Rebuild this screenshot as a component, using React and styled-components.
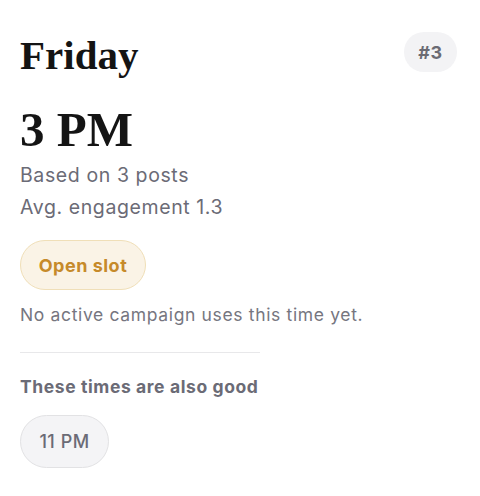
import styled, { createGlobalStyle } from "styled-components";

const GlobalStyle = createGlobalStyle`
  html, body {
    margin: 0;
    padding: 0;
    background: #ffffff;
  }
  body {
    font-family: Inter, "Noto Sans", sans-serif;
    color: #6b6b76;
  }
`;

const Card = styled.div`
  width: 480px;
  box-sizing: border-box;
  padding: 29px 23px 20px 20px;
  display: flex;
  flex-direction: column;
`;

const Header = styled.div`
  display: flex;
  justify-content: space-between;
  align-items: flex-start;
`;

const Day = styled.h1`
  margin: 0;
  font-family: "Liberation Serif", "DejaVu Serif", serif;
  font-weight: 700;
  font-size: 41px;
  line-height: 52px;
  color: #141414;
`;

const Rank = styled.span`
  margin-top: 3px;
  height: 40px;
  width: 53px;
  display: inline-flex;
  align-items: center;
  justify-content: center;
  border-radius: 20px;
  background: #f3f3f5;
  font-weight: 700;
  font-size: 18px;
  letter-spacing: 0.6px;
  color: #6b6b73;
`;

const Time = styled.div`
  margin-top: 21px;
  font-family: "Liberation Serif", "DejaVu Serif", serif;
  font-weight: 700;
  font-size: 49px;
  line-height: 56px;
  color: #141414;
`;

const Stats = styled.div`
  display: flex;
  flex-direction: column;
  gap: 4px;
  margin-top: 3px;
`;

const Stat = styled.p`
  margin: 0;
  font-size: 19.5px;
  line-height: 28px;
  letter-spacing: 0.6px;
  color: #6b6b76;
`;

const Pill = styled.span`
  display: inline-flex;
  align-items: center;
  justify-content: center;
  box-sizing: border-box;
  height: ${(p) => (p.$tone === "gold" ? "50px" : "53px")};
  width: ${(p) => (p.$tone === "gold" ? "126px" : "89px")};
  border-radius: 999px;
  font-size: 18px;
  letter-spacing: 0.5px;
  font-weight: ${(p) => (p.$tone === "gold" ? 700 : 500)};
  background: ${(p) => (p.$tone === "gold" ? "#faf3e6" : "#f4f4f6")};
  border: 1px solid ${(p) => (p.$tone === "gold" ? "#f0dfb8" : "#e2e2e4")};
  color: ${(p) => (p.$tone === "gold" ? "#c68a2a" : "#6b6b76")};
`;

const SlotWrap = styled.div`
  margin-top: 19px;
  display: flex;
`;

const Note = styled.p`
  margin: 13px 0 0;
  font-size: 17.5px;
  line-height: 24px;
  letter-spacing: 0.65px;
  color: #76767f;
`;

const Divider = styled.hr`
  width: 240px;
  margin: 25px 0 0;
  border: none;
  border-top: 1px solid #e8e8ea;
`;

const SubTitle = styled.h3`
  margin: 22px 0 0;
  font-size: 17.5px;
  line-height: 24px;
  letter-spacing: 0.6px;
  font-weight: 700;
  color: #6b6b76;
`;

const AltList = styled.div`
  margin-top: 16px;
  display: flex;
  gap: 8px;
`;

export default function App() {
  return (
    <>
      <GlobalStyle />
      <Card>
        <Header>
          <Day>Friday</Day>
          <Rank>#3</Rank>
        </Header>
        <Time>3 PM</Time>
        <Stats>
          <Stat>Based on 3 posts</Stat>
          <Stat>Avg. engagement 1.3</Stat>
        </Stats>
        <SlotWrap>
          <Pill $tone="gold">Open slot</Pill>
        </SlotWrap>
        <Note>No active campaign uses this time yet.</Note>
        <Divider />
        <SubTitle>These times are also good</SubTitle>
        <AltList>
          <Pill>11 PM</Pill>
        </AltList>
      </Card>
    </>
  );
}
